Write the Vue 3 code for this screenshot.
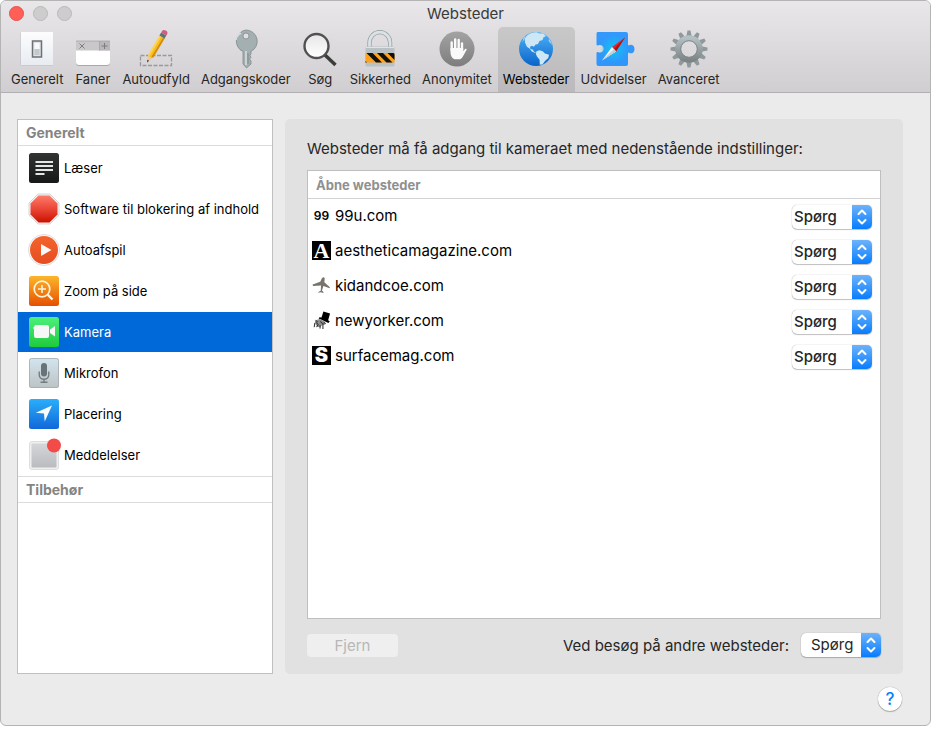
<script setup>
import { ref } from 'vue'

const tabs = [
  { id: 'general', label: 'Generelt' },
  { id: 'tabs', label: 'Faner' },
  { id: 'autofill', label: 'Autoudfyld' },
  { id: 'passwords', label: 'Adgangskoder' },
  { id: 'search', label: 'Søg' },
  { id: 'security', label: 'Sikkerhed' },
  { id: 'privacy', label: 'Anonymitet' },
  { id: 'websites', label: 'Websteder' },
  { id: 'extensions', label: 'Udvidelser' },
  { id: 'advanced', label: 'Avanceret' },
]
const activeTab = ref('websites')

const sections = [
  { id: 'reader', label: 'Læser' },
  { id: 'blockers', label: 'Software til blokering af indhold' },
  { id: 'autoplay', label: 'Autoafspil' },
  { id: 'zoom', label: 'Zoom på side' },
  { id: 'camera', label: 'Kamera' },
  { id: 'microphone', label: 'Mikrofon' },
  { id: 'location', label: 'Placering' },
  { id: 'notifications', label: 'Meddelelser' },
]
const activeSection = ref('camera')

const options = ['Spørg', 'Afvis', 'Tillad']
const sites = ref([
  { host: '99u.com', icon: 'nines', policy: 'Spørg' },
  { host: 'aestheticamagazine.com', icon: 'serif', policy: 'Spørg' },
  { host: 'kidandcoe.com', icon: 'plane', policy: 'Spørg' },
  { host: 'newyorker.com', icon: 'tophat', policy: 'Spørg' },
  { host: 'surfacemag.com', icon: 'block', policy: 'Spørg' },
])
const otherPolicy = ref('Spørg')
const teeth = Array.from({ length: 12 }, (_, i) => i * 30)
</script>

<template>
  <div class="desktop">
    <div class="window">
      <header class="chrome">
        <div class="titlebar">
          <div class="lights">
            <button class="light close" type="button" aria-label="Luk"></button>
            <button class="light" type="button" aria-label="Minimer" disabled></button>
            <button class="light" type="button" aria-label="Zoom" disabled></button>
          </div>
          <h1 class="title">Websteder</h1>
        </div>
        <nav class="toolbar">
          <button
            v-for="tab in tabs"
            :key="tab.id"
            type="button"
            class="tab"
            :class="{ active: tab.id === activeTab }"
            @click="activeTab = tab.id"
          >
            <svg class="tab-icon" viewBox="0 0 36 40" aria-hidden="true">
              <defs>
                <linearGradient :id="`tg-${tab.id}`" x1="0" y1="0" x2="0" y2="1">
                  <template v-if="tab.id === 'privacy'">
                    <stop offset="0" stop-color="#a3a3a3" /><stop offset="1" stop-color="#7d7d7d" />
                  </template>
                  <template v-else-if="tab.id === 'websites'">
                    <stop offset="0" stop-color="#4db2f8" /><stop offset="1" stop-color="#0b63c9" />
                  </template>
                  <template v-else-if="tab.id === 'general'">
                    <stop offset="0" stop-color="#fdfdfe" /><stop offset="1" stop-color="#e8ecf1" />
                  </template>
                  <template v-else-if="tab.id === 'extensions'">
                    <stop offset="0" stop-color="#3399fb" /><stop offset="1" stop-color="#2f96fb" />
                  </template>
                  <template v-else-if="tab.id === 'search'">
                    <stop offset="0" stop-color="#e6e6e6" /><stop offset="1" stop-color="#ffffff" />
                  </template>
                  <template v-else>
                    <stop offset="0" stop-color="#b3c0c4" /><stop offset="1" stop-color="#7d8486" />
                  </template>
                </linearGradient>
                <radialGradient v-if="tab.id === 'extensions'" id="compass-glow">
                  <stop offset="0" stop-color="#10c4f5" /><stop offset="1" stop-color="#10c4f5" stop-opacity="0" />
                </radialGradient>
              </defs>

              <g v-if="tab.id === 'general'">
                <rect x="1.500" y="3.500" width="32" height="33" fill="#aeb4ba" opacity=".6" />
                <rect x="2" y="3" width="32" height="33" fill="url(#tg-general)" />
                <rect x="13.500" y="12" width="9" height="16" fill="#dfe2e5" stroke="#6d7174" stroke-width="1.500" />
                <rect x="15.500" y="14" width="5" height="6" fill="#f8f9fa" />
                <rect x="15.500" y="20" width="5" height="6" fill="#c4c8cc" />
              </g>

              <g v-else-if="tab.id === 'tabs'">
                <rect x="1" y="3" width="34" height="34" rx="3" fill="#aaa8aa" />
                <rect x="1" y="3" width="34" height="33" rx="3" fill="#fff" />
                <path d="M1 12V6a3 3 0 0 1 3-3h28a3 3 0 0 1 3 3v6z" fill="#dfdddf" />
                <path d="M1 12h34v9.500H1z" fill="#c9c7c9" />
                <path d="M24.500 12h10.500v9.500H24.500z" fill="#b9b7b9" />
                <path d="M24.500 12v9.500M1 12h34" stroke="#a09ea0" stroke-width=".7" />
                <path d="M4.500 14.500l5 5m0-5l-5 5M29.500 14v6m-3-3h6" stroke="#7e7c7e" fill="none" />
              </g>

              <g v-else-if="tab.id === 'autofill'">
                <rect x="2.500" y="26.500" width="31" height="10" fill="none" stroke="#9b999b" stroke-width="1.300" stroke-dasharray="4 1.500" />
                <g transform="translate(9 33.500) rotate(30.500)">
                  <path d="M-3-7.500L0 0l3-7.500z" fill="#edc795" />
                  <path d="M-1-2.500L0 0l1-2.500z" fill="#333" />
                  <path d="M-3-30h2v23.500l-2-1z" fill="#ffd345" />
                  <path d="M-1-30h2v23.500h-2z" fill="#fbbb13" />
                  <path d="M1-30h2v22.500l-2 1z" fill="#d48c00" />
                  <path d="M-3-33h6v3.500h-6z" fill="#56777f" />
                  <path d="M-3-33v-1.500a3 2.500 0 0 1 6 0v1.500z" fill="#d35b7d" />
                </g>
              </g>

              <g v-else-if="tab.id === 'passwords'">
                <path
                  fill-rule="evenodd"
                  d="M18 1a11.300 11.300 0 0 1 5 21.400V25l-1 1.500 1 2-1.500 1.500 1.500 2v3L18.500 39 15 35V22.500A11.300 11.300 0 0 1 18 1zm0 3a3 3 0 1 0 0 6 3 3 0 0 0 0-6z"
                  fill="#a4afb2" stroke="#778387" stroke-width=".7"
                />
                <path d="M8 11a10 9 0 0 1 5-7M18 22v14" stroke="#d8dfe1" stroke-width="1.500" fill="none" />
                <path d="M20 24v11" stroke="#7c878a" fill="none" />
              </g>

              <g v-else-if="tab.id === 'search'">
                <path d="M23 26l10.500 10" stroke="#3c3c3c" stroke-width="3.500" />
                <circle cx="14.500" cy="17" r="12" fill="url(#tg-search)" stroke="#515151" stroke-width="2.400" />
              </g>

              <g v-else-if="tab.id === 'security'">
                <path d="M7.500 20v-6.500a10.300 10.300 0 0 1 20.600 0V20" fill="none" stroke="#939ca0" stroke-width="4.200" />
                <path d="M7.500 20v-6.500a10.300 10.300 0 0 1 20.600 0V20" fill="none" stroke="#dbe2e5" stroke-width="2.800" />
                <rect x="3.500" y="17.500" width="29" height="20" rx="1.500" fill="#b9c1c5" />
                <path d="M4 18.500h28" stroke="#dfe4e6" />
                <path d="M3.500 24h29v9.500h-29z" fill="#ffa21a" />
                <path d="M4.500 24h6l9.500 9.500h-6zM15 24h6l9.500 9.500h-6zM25.500 24h6l1 1v6zM3.500 32v1.500H5z" fill="#111" />
              </g>

              <g v-else-if="tab.id === 'privacy'">
                <circle cx="18" cy="20" r="17.500" fill="url(#tg-privacy)" />
                <path
                  d="M12.700 21v-7.500M16.200 20V10.500M19.700 20v-9M23 21v-6.500" stroke="#fafafa" stroke-width="2.400" stroke-linecap="round" fill="none"
                />
                <path d="M11.500 19h12.700v3.200l1.600-2c1-.9 2.300-.3 1.700.9l-3.300 6c-.8 1.500-1.700 2.700-3.200 3.200h-5.500c-2.700-1-4-4-4-7z" fill="#fafafa" />
              </g>

              <g v-else-if="tab.id === 'websites'">
                <circle cx="18" cy="20" r="17" fill="url(#tg-websites)" />
                <path d="M9 6.500c3-2.300 6-3.300 9.500-3.300l3 1.200 3.500.2 3 2.400-2.500 1.200-1 2.800-3 1-1.500 3-2.800.7-1.200 2-2-1-2 1 .4 2.200 2.300.6 1.300 2.200 2.200.5-1.400.6-3-1.400-2-2.600-2.900-2.100-1.900-4.300-.2-4z" fill="#cde7f5" />
                <path d="M18.500 22.200l3-1 3.200 1 2.300 2.300 4 1.200-.7 3.300-3.300 3-2.500 3.500-2.700.3-.2-5-2.600-3.200-1.200-2.800z" fill="#cde7f5" />
                <path d="M31 9.500l1.700 3 1.500 3.500-1.500-1.500-2-2.500zM5.500 9l2-2.500-.7 3-2.500 4z" fill="#a6d5f3" />
              </g>

              <g v-else-if="tab.id === 'extensions'">
                <path
                  d="M1.500 3H30a2 2 0 0 1 2 2v11l.8.500C34 15 38.500 15 38.500 20s-4.500 5-5.700 3.500l-.8.500v11a2 2 0 0 1-2 2H2.500a2 2 0 0 1-2-2V24c.7-2 1.400-.5 3.300-.5 5 0 5-7.500 0-7.500-1.800 0-2.600 1.500-3.300-.5V5a2 2 0 0 1 1-2z"
                  fill="url(#tg-extensions)"
                />
                <circle cx="18" cy="20" r="14" fill="url(#compass-glow)" />
                <path d="M29 8.500L16 18l4 4.500z" fill="#e5262b" />
                <path d="M29 8.500L18 20l2 2.500z" fill="#ae1016" />
                <path d="M6 31.500L16 18l4 4.500z" fill="#f6f6f6" />
                <path d="M6 31.500L18 20l2 2.500z" fill="#c3cfd5" />
              </g>

              <g v-else>
                <path
                  v-for="angle in teeth"
                  :key="angle"
                  d="M15.200 8l1.300-6.500h3l1.300 6.500z"
                  fill="#8f999c"
                  :transform="`rotate(${angle} 18 20)`"
                />
                <circle cx="18" cy="20" r="11" fill="none" stroke="url(#tg-advanced)" stroke-width="5.500" />
                <circle cx="18" cy="20" r="8.300" fill="none" stroke="#7c8587" />
              </g>
            </svg>
            <span class="tab-label">{{ tab.label }}</span>
          </button>
        </nav>
      </header>

      <main class="content">
        <aside class="sidebar">
          <h2 class="group-title">Generelt</h2>
          <ul class="sections">
            <li v-for="section in sections" :key="section.id">
              <button
                type="button"
                class="section"
                :class="{ selected: section.id === activeSection }"
                @click="activeSection = section.id"
              >
                <svg class="section-icon" viewBox="0 0 32 32" aria-hidden="true">
                  <defs>
                    <linearGradient :id="`sg-${section.id}`" x1="0" y1="0" x2="0" y2="1">
                      <template v-if="section.id === 'reader'">
                        <stop offset="0" stop-color="#323434" /><stop offset="1" stop-color="#171818" />
                      </template>
                      <template v-else-if="section.id === 'blockers'">
                        <stop offset="0" stop-color="#ff7a69" /><stop offset=".5" stop-color="#ea4636" /><stop offset="1" stop-color="#cc1100" />
                      </template>
                      <template v-else-if="section.id === 'autoplay'">
                        <stop offset="0" stop-color="#f4632d" /><stop offset="1" stop-color="#e64d21" />
                      </template>
                      <template v-else-if="section.id === 'zoom'">
                        <stop offset="0" stop-color="#fcb62b" /><stop offset="1" stop-color="#e65000" />
                      </template>
                      <template v-else-if="section.id === 'camera'">
                        <stop offset="0" stop-color="#4cf07c" /><stop offset="1" stop-color="#20cb3b" />
                      </template>
                      <template v-else-if="section.id === 'microphone'">
                        <stop offset="0" stop-color="#d3e5ee" /><stop offset="1" stop-color="#bcc3c4" />
                      </template>
                      <template v-else-if="section.id === 'location'">
                        <stop offset="0" stop-color="#2aaffb" /><stop offset="1" stop-color="#1167d9" />
                      </template>
                      <template v-else>
                        <stop offset="0" stop-color="#d5d6d9" /><stop offset="1" stop-color="#babbbe" />
                      </template>
                    </linearGradient>
                  </defs>

                  <g v-if="section.id === 'blockers'">
                    <path d="M10 1h12l9 9v12l-9 9H10l-9-9V10z" fill="#f3f3f3" stroke="#d5d5d5" />
                    <path d="M10.500 2.500h11l8 8v11l-8 8h-11l-8-8v-11z" fill="url(#sg-blockers)" />
                  </g>
                  <g v-else-if="section.id === 'autoplay'">
                    <circle cx="16" cy="16" r="15.500" fill="#fff" stroke="#dcdcdc" />
                    <circle cx="16" cy="16" r="14" fill="url(#sg-autoplay)" />
                    <path d="M13 10l10.500 6L13 22z" fill="#f8f8f8" />
                  </g>
                  <g v-else-if="section.id === 'notifications'">
                    <rect x="1.500" y="2.500" width="29" height="28" rx="2.500" fill="#efefef" stroke="#dedede" />
                    <rect x="3.500" y="4.500" width="25" height="24" rx="1" fill="url(#sg-notifications)" />
                    <circle cx="26" cy="6.500" r="7" fill="#f24b48" />
                  </g>
                  <g v-else>
                    <rect x="1" y="1" width="30" height="30" rx="2.500" :fill="`url(#sg-${section.id})`" />
                    <path v-if="section.id === 'reader'" d="M7.500 10h17.500M7.500 14h17.500M7.500 18h17.500M7.500 22h9" stroke="#e4e6e6" stroke-width="2" />
                    <g v-else-if="section.id === 'zoom'" fill="none" stroke="#fff3dc">
                      <circle cx="14" cy="14" r="7.800" stroke-width="1.700" />
                      <path d="M19.500 19.500l5 5" stroke-width="2.400" />
                      <path d="M10 14h8M14 10v8" stroke-width="1.600" />
                    </g>
                    <g v-else-if="section.id === 'camera'" fill="#f7f7f7">
                      <path d="M7 9h12a2 2 0 0 1 2 2v9a2 2 0 0 1-2 2H8a2 2 0 0 1-2-2v-7l-1-1 1-1z" />
                      <path d="M27 10v10.500L22 17v-3.500z" />
                    </g>
                    <g v-else-if="section.id === 'microphone'">
                      <rect x="1.500" y="1.500" width="29" height="29" rx="2" fill="none" stroke="#9fa8ab" opacity=".7" />
                      <rect x="13" y="6" width="6" height="13.500" rx="3" fill="#687377" />
                      <path d="M11.200 14.500v3a4.800 4.800 0 0 0 9.600 0v-3M16 22.500V25M12.500 25.300h7" fill="none" stroke="#737d80" stroke-width="1.400" />
                    </g>
                    <path v-else d="M24 7.500L16.700 23.500l-.7-8-8.200-.8z" fill="#f7fbff" />
                  </g>
                </svg>
                <span>{{ section.label }}</span>
              </button>
            </li>
          </ul>
          <h2 class="group-title addons">Tilbehør</h2>
        </aside>

        <section class="panel">
          <p class="intro">Websteder må få adgang til kameraet med nedenstående indstillinger:</p>
          <div class="site-box">
            <table class="sites">
              <thead>
                <tr><th colspan="2" scope="col">Åbne websteder</th></tr>
              </thead>
              <tbody>
                <tr v-for="site in sites" :key="site.host">
                  <td>
                    <label class="site" :for="`policy-${site.icon}`">
                      <span v-if="site.icon === 'nines'" class="favicon nines" aria-hidden="true">99</span>
                      <span v-else-if="site.icon === 'serif'" class="favicon serif" aria-hidden="true">A</span>
                      <span v-else-if="site.icon === 'block'" class="favicon block" aria-hidden="true">S</span>
                      <svg v-else-if="site.icon === 'plane'" class="favicon" viewBox="0 0 20 20" aria-hidden="true">
                        <path d="M11.700 1.500c1.200-.3 1.800.5 1.600 2l-.3 3 5.800 5.300-.3 1.200-6.500-2.400-1.500 4.600 1.700 2-.3.800-2.700-.8-2.600.5.100-.9 2.500-1.400.3-5.400-8.500.4L.7 9l8-3 1.600-3.300c.4-.7.8-1.100 1.400-1.200z" fill="#78736c" />
                      </svg>
                      <svg v-else class="favicon" viewBox="0 0 20 20" aria-hidden="true">
                        <path d="M12 .5l7 2.200-2 7 1.700 1.300-1.500 1.500L9.500 9 7 8l.8-1.500 2.200.3z" fill="#000" />
                        <path d="M3 10l5-1.500 6 3-.5 3-3 .5-2 2-3-.5-2-3z" fill="#8d8d8d" />
                        <path d="M3 12.500l-.7 4.500M4.500 12l2 2.500-1.800 2.500M9 11l1.500 2M8.500 15v3.500M11.500 12.500v6.500M4 10l2 1.500M12.500 12l2 1.500" stroke="#1c1c1c" fill="none" />
                      </svg>
                      <span>{{ site.host }}</span>
                    </label>
                  </td>
                  <td class="policy-cell">
                    <span class="popup">
                      <select :id="`policy-${site.icon}`" v-model="site.policy" class="strong">
                        <option v-for="option in options" :key="option">{{ option }}</option>
                      </select>
                      <svg class="arrows" viewBox="0 0 20 24" aria-hidden="true"><path d="M6.500 9L10 5.500 13.500 9M6.500 15l3.500 3.500 3.500-3.500" /></svg>
                    </span>
                  </td>
                </tr>
              </tbody>
            </table>
          </div>
          <div class="actions">
            <button class="remove" type="button" disabled>Fjern</button>
            <label class="other" for="other-policy">Ved besøg på andre websteder:</label>
            <span class="popup">
              <select id="other-policy" v-model="otherPolicy">
                <option v-for="option in options" :key="option">{{ option }}</option>
              </select>
              <svg class="arrows" viewBox="0 0 20 24" aria-hidden="true"><path d="M6.500 9L10 5.500 13.500 9M6.500 15l3.500 3.500 3.500-3.500" /></svg>
            </span>
          </div>
        </section>
      </main>

      <footer class="footer">
        <button class="help" type="button">?</button>
      </footer>
    </div>
  </div>
</template>

<style>
body {
  background: #fff;
}
</style>

<style scoped>
* {
  box-sizing: border-box;
}
button,
select {
  font: inherit;
  color: inherit;
  margin: 0;
  border: 0;
  background: none;
}
.desktop {
  display: flex;
  min-height: 100vh;
  padding: 0 3px 3px 0;
  font-family: Inter, Roboto, "Liberation Sans", sans-serif;
  font-size: 15px;
  color: #262626;
}
.window {
  flex: 1;
  display: flex;
  flex-direction: column;
  border: 1px solid #b4b4b4;
  border-radius: 6px;
  background: #ebebeb;
  overflow: hidden;
}
.chrome {
  background: linear-gradient(#e9e7e9, #d0ced0);
  border-bottom: 1px solid #b2b0b2;
}
.titlebar {
  display: grid;
  grid-template-columns: 1fr auto 1fr;
  align-items: center;
  height: 26px;
}
.lights {
  display: flex;
  gap: 9px;
  padding: 0 0 2px 8px;
}
.light {
  width: 15px;
  height: 15px;
  padding: 0;
  border: 1px solid #bab9ba;
  border-radius: 50%;
  background: #cecdce;
}
.light.close {
  border-color: #e9504a;
  background: #ff5f57;
}
.title {
  margin: 0;
  font-size: 15px;
  line-height: 20px;
  font-weight: 400;
  color: #3a3a3a;
}
.toolbar {
  display: flex;
  gap: 1px;
  padding-left: 5px;
}
.tab {
  display: flex;
  flex-direction: column;
  align-items: center;
  gap: 2px;
  min-width: 47px;
  padding: 2px 5px 4px;
  border-radius: 5px 5px 0 0;
  font-size: 13px;
  line-height: 17px;
}
.tab.active {
  background: linear-gradient(#c9c8c9, #bbb9bb);
  color: #000;
}
.tab-icon {
  width: 36px;
  height: 40px;
  overflow: visible;
}
.content {
  flex: 1;
  display: flex;
  gap: 12px;
  padding: 26px 27px 0 16px;
}
.sidebar {
  width: 256px;
  flex: none;
  border: 1px solid #c0c0c0;
  background: #fff;
}
.group-title {
  margin: 0;
  padding: 0 8px;
  border-bottom: 1px solid #dcdcdc;
  font-size: 14px;
  line-height: 25px;
  font-weight: 700;
  color: #848484;
}
.group-title.addons {
  border-top: 1px solid #dcdcdc;
}
.sections {
  margin: 0;
  padding: 2px 0 0;
  list-style: none;
}
.section {
  display: flex;
  align-items: center;
  gap: 4px;
  width: 100%;
  height: 41px;
  padding: 0 0 0 10px;
  border-bottom: 1px solid transparent;
  background-clip: padding-box;
  font-size: 13px;
  color: #000;
  text-align: left;
  white-space: nowrap;
}
.section.selected {
  background-color: #0069d9;
  color: #fff;
}
.section-icon {
  width: 32px;
  height: 32px;
  flex: none;
  overflow: visible;
}
.panel {
  flex: 1;
  min-width: 0;
  display: flex;
  flex-direction: column;
  padding: 20px 22px 17px;
  border-radius: 5px;
  background: #e1e1e1;
}
.intro {
  margin: 0;
  line-height: 20px;
}
.site-box {
  flex: 1;
  margin-top: 11px;
  border: 1px solid #bfbfbf;
  background: #fff;
}
.sites {
  width: 100%;
  border-collapse: collapse;
  color: #000;
}
.sites th {
  height: 27px;
  padding: 2px 8px 0;
  border-bottom: 1px solid #d2d2d2;
  font-size: 13px;
  font-weight: 700;
  text-align: left;
  color: #909090;
}
.sites td {
  height: 35px;
  padding: 0 4px;
}
.sites td.policy-cell {
  padding: 2px 8px 0 0;
  text-align: right;
}
.site {
  display: flex;
  align-items: center;
  gap: 4px;
}
.favicon {
  width: 19px;
  height: 19px;
  flex: none;
  line-height: 19px;
  text-align: center;
}
.favicon.nines {
  font-size: 12px;
  font-weight: 600;
}
.favicon.serif {
  background: #000;
  color: #fff;
  font-family: "Liberation Serif", serif;
  font-size: 22px;
  font-weight: 700;
}
.favicon.block {
  background: #000;
  color: #fff;
  font-size: 20px;
  font-weight: 900;
}
.popup {
  position: relative;
  display: inline-block;
  vertical-align: middle;
  width: 80px;
  height: 24px;
  border-radius: 5px;
  background: #fff;
  box-shadow: 0 0 1px rgba(0, 0, 0, 0.4), 0 1px 1px rgba(0, 0, 0, 0.22);
  color: #262626;
  overflow: hidden;
}
.popup select {
  display: block;
  width: 100%;
  height: 24px;
  padding: 0 20px 0 10px;
  appearance: none;
  line-height: 24px;
}
.popup select.strong {
  padding-left: 2px;
  font-weight: 500;
}
.arrows {
  position: absolute;
  top: 0;
  right: 0;
  width: 20px;
  height: 24px;
  background: linear-gradient(#6cb3fa, #077cfe);
  fill: none;
  stroke: #fff;
  stroke-width: 2;
  stroke-linecap: round;
  stroke-linejoin: round;
  pointer-events: none;
}
.actions {
  display: flex;
  align-items: center;
  gap: 12px;
  margin-top: 14px;
}
.remove {
  width: 91px;
  height: 23px;
  padding: 0;
  border-radius: 4px;
  background: #efefef;
  color: #b7b7b7;
}
.other {
  margin-left: auto;
}
.footer {
  display: flex;
  justify-content: flex-end;
  padding: 13px 28px 14px;
}
.help {
  width: 24px;
  height: 24px;
  padding: 0;
  border-radius: 50%;
  background: #fff;
  box-shadow: 0 0 1px rgba(0, 0, 0, 0.4), 0 1px 1px rgba(0, 0, 0, 0.25);
  font-size: 17px;
  line-height: 24px;
  font-weight: 500;
  color: #0a7efe;
}
</style>
